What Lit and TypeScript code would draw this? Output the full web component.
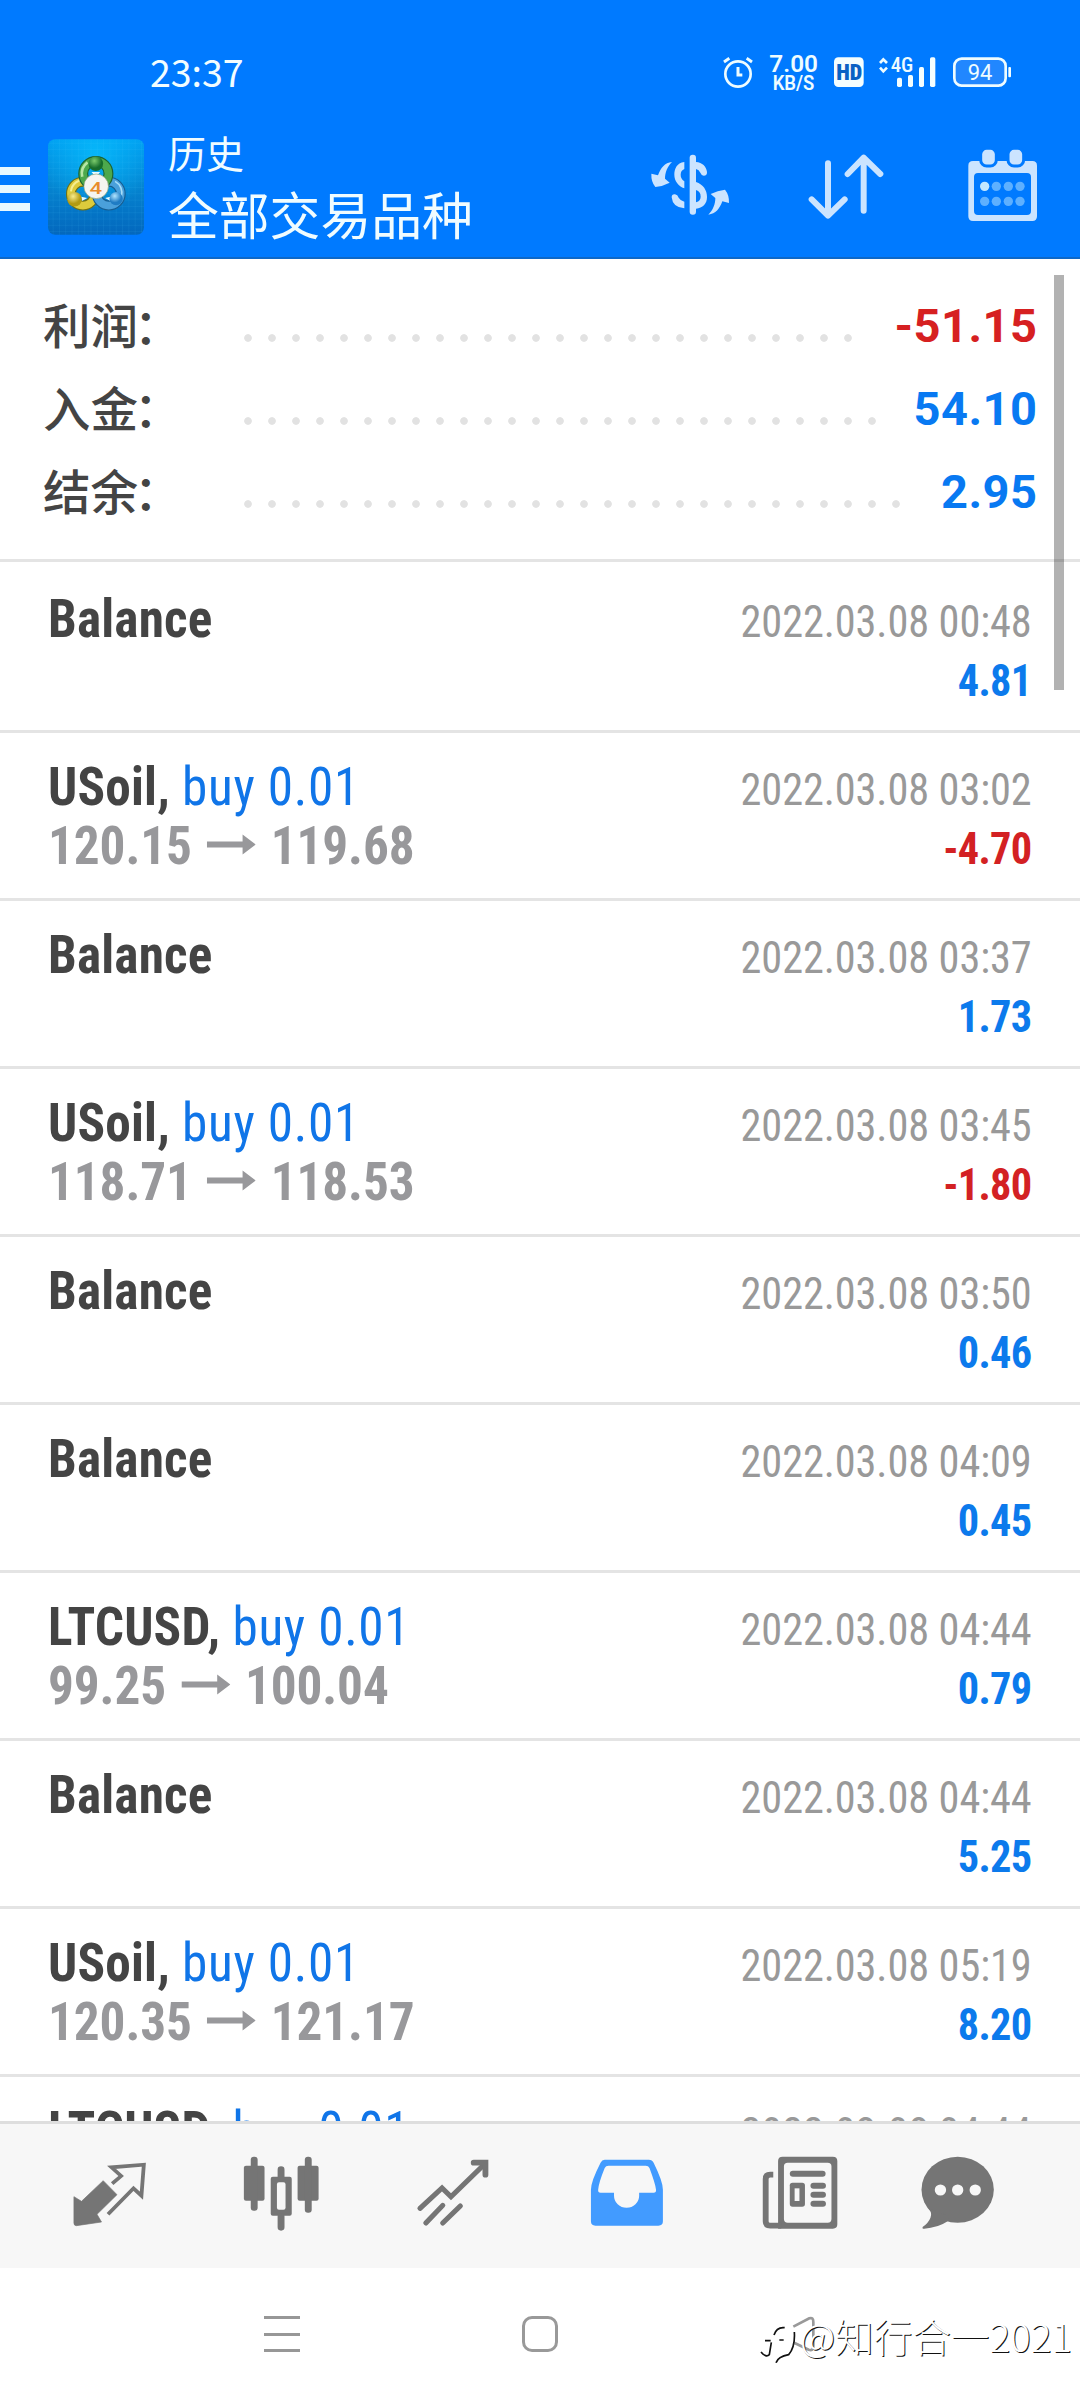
import { LitElement, html, css, svg, nothing } from "lit";
import { customElement, property } from "lit/decorators.js";

interface Deal {
  symbol: string;
  side?: string;
  open?: string;
  close?: string;
  time: string;
  profit: string;
}

const SUMMARY = [
  { label: "利润：", value: "-51.15" },
  { label: "入金：", value: "54.10" },
  { label: "结余：", value: "2.95" },
];

const DEALS: Deal[] = [
  { symbol: "Balance", time: "2022.03.08 00:48", profit: "4.81" },
  { symbol: "USoil,", side: "buy 0.01", open: "120.15", close: "119.68", time: "2022.03.08 03:02", profit: "-4.70" },
  { symbol: "Balance", time: "2022.03.08 03:37", profit: "1.73" },
  { symbol: "USoil,", side: "buy 0.01", open: "118.71", close: "118.53", time: "2022.03.08 03:45", profit: "-1.80" },
  { symbol: "Balance", time: "2022.03.08 03:50", profit: "0.46" },
  { symbol: "Balance", time: "2022.03.08 04:09", profit: "0.45" },
  { symbol: "LTCUSD,", side: "buy 0.01", open: "99.25", close: "100.04", time: "2022.03.08 04:44", profit: "0.79" },
  { symbol: "Balance", time: "2022.03.08 04:44", profit: "5.25" },
  { symbol: "USoil,", side: "buy 0.01", open: "120.35", close: "121.17", time: "2022.03.08 05:19", profit: "8.20" },
  { symbol: "LTCUSD,", side: "buy 0.01", time: "2022.03.08 04:44", profit: "" },
];

const tone = (v: string) => (v.startsWith("-") ? "loss" : "gain");

@customElement("status-bar")
class StatusBar extends LitElement {
  static styles = css`
    :host { display: flex; justify-content: space-between; align-items: center; height: 60px; padding: 45px 60px 0 150px; color: #f2fdff; }
    .clock { font: 400 37.5px/60px "Noto Sans CJK SC", sans-serif; margin-top: -9px; }
    text { font-family: Roboto, sans-serif; fill: #eefcff; }
    .rate { font-size: 72px; font-weight: 600; }
    .unit { font-size: 58px; font-weight: 600; }
    .hd { font-size: 68px; font-weight: 900; font-stretch: 75%; fill: #0a62c4; }
    .net { font-size: 59px; font-weight: 500; font-stretch: 75%; }
    .level { font-size: 65px; font-weight: 400; }
  `;
  render() {
    return html`
      <span class="clock">23:37</span>
      <svg width="310" height="60" viewBox="0 0 930 180" fill="none" stroke="#eefcff" stroke-width="8">
        <circle cx="84" cy="87" r="38" />
        <path d="M84 66V90H97M42 51L58 40M110 40L126 51" stroke-width="9" />
        <text class="rate" x="178" y="81" textLength="146" lengthAdjust="spacingAndGlyphs" stroke="none">7.00</text>
        <text class="unit" x="188" y="136" textLength="125" lengthAdjust="spacingAndGlyphs" stroke="none">KB/S</text>
        <rect x="372" y="37" width="89" height="89" rx="13" fill="#f4feff" stroke="none" />
        <text class="hd" x="379" y="106" textLength="78" lengthAdjust="spacingAndGlyphs" stroke="none">HD</text>
        <path d="M510 54L520 43L531 54M510 68L520 79L531 68" stroke-width="8" />
        <text class="net" x="542" y="81" textLength="68" lengthAdjust="spacingAndGlyphs" stroke="none">4G</text>
        <g fill="#f4feff" stroke="none">
          <rect x="561" y="98" width="15" height="28" rx="5" /><rect x="594" y="90" width="15" height="36" rx="5" />
          <rect x="627" y="66" width="15" height="60" rx="5" /><rect x="660" y="37" width="16" height="89" rx="5" />
          <rect x="895" y="66" width="8" height="31" rx="3" />
        </g>
        <rect x="733" y="41" width="154" height="81" rx="22" fill="#2187ff" />
        <text class="level" x="773" y="104" textLength="74" lengthAdjust="spacingAndGlyphs" stroke="none">94</text>
      </svg>
    `;
  }
}

@customElement("app-header")
class AppHeader extends LitElement {
  static styles = css`
    :host { display: flex; align-items: flex-start; border-bottom: 2px solid #0d68c8; color: #f0fcff; font-family: "Noto Sans CJK SC", sans-serif; }
    .menu { display: flex; flex-direction: column; gap: 10px; width: 30px; margin: 62px 18px 0 0; }
    .menu i { height: 8px; background: #e8f8ff; }
    .logo { width: 96px; height: 96px; margin: 34px 24px 0 0; }
    .four { font: 500 50px Roboto, sans-serif; fill: #e88c2c; }
    .titles { flex: 1; padding-top: 21px; }
    .small { font-size: 38px; line-height: 52px; }
    .large { font-size: 50.8px; line-height: 70px; }
    .actions { display: block; width: 440px; height: 90px; margin-top: 35px; }
  `;
  render() {
    return html`
      <div class="menu"><i></i><i></i><i></i></div>
      <svg class="logo" viewBox="24 27 289 288">
        <defs>
          <linearGradient id="bg" x2="0" y2="1"><stop offset="0" stop-color="#009df0" /><stop offset=".5" stop-color="#0584d0" /><stop offset="1" stop-color="#0367bd" /></linearGradient>
          <radialGradient id="glow" cx=".5" cy=".15" r=".6"><stop offset="0" stop-color="#08c0ff" stop-opacity=".75" /><stop offset="1" stop-color="#08c0ff" stop-opacity="0" /></radialGradient>
          <radialGradient id="gr" cx=".4" cy=".3"><stop offset="0" stop-color="#7ccb6c" /><stop offset="1" stop-color="#176d2b" /></radialGradient>
          <radialGradient id="ye" cx=".4" cy=".3"><stop offset="0" stop-color="#f8ec8c" /><stop offset="1" stop-color="#b29a12" /></radialGradient>
          <radialGradient id="bl" cx=".4" cy=".3"><stop offset="0" stop-color="#b2e6ff" /><stop offset="1" stop-color="#1f7cc4" /></radialGradient>
          <pattern id="grid" width="19" height="19" patternUnits="userSpaceOnUse"><path d="M0 0H19M0 0V19" stroke="#4fd0ff" stroke-opacity=".22" stroke-width="2" /></pattern>
        </defs>
        <rect x="24" y="27" width="289" height="288" rx="22" fill="url(#bg)" />
        <rect x="24" y="27" width="289" height="288" rx="22" fill="url(#glow)" />
        <rect x="24" y="27" width="289" height="288" rx="22" fill="url(#grid)" />
        <g fill="none">
          <circle cx="129" cy="191" r="36" stroke="#6f7015" stroke-width="30" /><circle cx="129" cy="191" r="36" stroke="#dccb3c" stroke-width="23" />
          <path d="M93 184A40 40 0 0 1 138 149" stroke="#f5ee90" stroke-width="6" />
          <circle cx="207" cy="191" r="36" stroke="#175d91" stroke-width="30" /><circle cx="207" cy="191" r="36" stroke="#4aa0db" stroke-width="23" />
          <path d="M226 154A40 40 0 0 1 245 200" stroke="#a7ddf8" stroke-width="5" />
          <circle cx="168" cy="131" r="38" stroke="#1c6331" stroke-width="30" /><circle cx="168" cy="131" r="38" stroke="#4da84c" stroke-width="23" />
          <path d="M127 140A42 42 0 0 1 143 97" stroke="#b7e6a5" stroke-width="8" />
        </g>
        <path d="M155 126H181L168 141ZM124 200L142 204L126 213ZM212 200L196 204L212 213Z" fill="#e8fbff" />
        <circle cx="168" cy="101" r="22" fill="url(#gr)" />
        <circle cx="104" cy="208" r="22" fill="url(#ye)" />
        <circle cx="229" cy="206" r="20" fill="url(#bl)" />
        <circle cx="169" cy="169" r="37" fill="#f5f5f1" stroke="#8aa07a" stroke-width="2" />
        <text class="four" x="149" y="191" textLength="38" lengthAdjust="spacingAndGlyphs" font-size="64">4</text>
      </svg>
      <div class="titles">
        <div class="small">历史</div>
        <div class="large">全部交易品种</div>
      </div>
      <svg class="actions" viewBox="0 0 1320 270" fill="#cbe4ff">
        <rect x="149" y="44" width="19" height="180" rx="9" />
        <path d="M133 66C110 68 103 88 103 104C103 123 115 138 133 145V124C125 118 122 112 122 104C122 95 126 90 133 87Z" />
        <path d="M95 172Q95 162 105 163Q113 164 116 173Q121 182 133 185V205Q98 203 95 172Z" />
        <path d="M168 66C187 67 199 80 201 96Q202 107 191 107Q184 106 181 98Q177 89 168 87Z" />
        <path d="M168 126C190 134 201 150 201 171C201 192 188 204 168 206V187C178 184 182 178 182 170C182 160 178 153 168 150Z" />
        <path d="M96 66C74 68 62 84 54 106L34 101Q33 125 46 141Q68 139 89 128L75 116C75 98 82 80 96 66Z" />
        <path transform="rotate(180 150.5 145)" d="M96 66C74 68 62 84 54 106L34 101Q33 125 46 141Q68 139 89 128L75 116C75 98 82 80 96 66Z" />
        <path d="M564 70V226M515 178L564 227L614 178M671 212V53M623 102L671 53L721 102" fill="none" stroke="#cbe4ff" stroke-width="18" stroke-linecap="round" stroke-linejoin="round" />
        <path fill-rule="evenodd" d="M999 63H1177Q1191 63 1191 77V229Q1191 243 1177 243H999Q985 243 985 229V77Q985 63 999 63ZM1014 99Q1002 99 1002 111V213Q1002 225 1014 225H1161Q1173 225 1173 213V111Q1173 99 1161 99Z" />
        <g stroke="#007aff" stroke-width="9">
          <rect x="1022" y="25" width="47" height="53" rx="18" /><rect x="1104" y="25" width="47" height="53" rx="18" />
        </g>
        <circle cx="1034" cy="139" r="14" fill="#c4e8ff" />
        <g fill="#5eb0ff">
          ${[1069, 1105, 1140].map((x) => svg`<circle cx=${x} cy="139" r="14" />`)}
          ${[1034, 1069, 1105, 1140].map((x) => svg`<circle cx=${x} cy="184" r="14" />`)}
        </g>
      </svg>
    `;
  }
}

@customElement("summary-panel")
class SummaryPanel extends LitElement {
  static styles = css`
    :host { display: block; height: 303px; padding: 25px 42.5px 0 43px; box-sizing: border-box; border-bottom: 3px solid #e4e4e4; }
    .line { display: flex; align-items: center; height: 83px; }
    .label { width: 193px; height: 83px; color: #444; font: 500 47.5px/79px "Noto Sans CJK SC", sans-serif; }
    .colon { margin-left: -4px; }
    .dots { flex: 1; height: 8px; margin: 25px 31px 0 0; background: radial-gradient(circle at 12px 4px, #e2e2e2 3.4px, transparent 4.2px) 0 0 / 24px 8px repeat-x; }
    .value { font: 700 47px/83px Roboto, sans-serif; letter-spacing: 0.5px; }
    .gain { color: #0879f2; }
    .loss { color: #d62021; }
  `;
  render() {
    return SUMMARY.map(
      (s) => html`<div class="line"><span class="label">${s.label.slice(0, -1)}<span class="colon">${s.label.slice(-1)}</span></span><span class="dots"></span><span class="value ${tone(s.value)}">${s.value}</span></div>`
    );
  }
}

@customElement("deal-row")
class DealRow extends LitElement {
  @property({ attribute: false }) deal!: Deal;
  static styles = css`
    :host { display: flex; justify-content: space-between; flex: none; box-sizing: border-box; height: 168px; padding: 23.5px 48px 0; border-bottom: 3px solid #e4e4e4; font-family: Roboto, sans-serif; font-stretch: 75%; }
    :host(:first-child) { height: 171px; padding-top: 26.5px; }
    .side { transform: scaleX(0.94); white-space: nowrap; }
    .left { transform-origin: 0 0; font-size: 54.5px; font-weight: 700; color: #444; }
    .right { transform-origin: 100% 0; font-size: 45px; color: #999; text-align: right; }
    .row { display: flex; align-items: baseline; height: 59px; line-height: 59px; }
    .right .row { justify-content: flex-end; letter-spacing: -0.1px; }
    .strut { width: 0; font-size: 54.5px; overflow: visible; visibility: hidden; }
    .symbol { letter-spacing: 0.2px; }
    .buy { color: #1075e8; font-weight: 400; margin-left: 13px; letter-spacing: 0.7px; }
    .prices { color: #98989b; letter-spacing: -0.1px; }
    .arrow { width: 52px; height: 22px; margin: 0 16px 0 16px; align-self: center; }
    .right .profit { font-weight: 700; letter-spacing: -0.7px; }
    .gain { color: #0c7aec; }
    .loss { color: #d32123; }
  `;
  render() {
    const d = this.deal;
    return html`
      <div class="side left">
        <div class="row"><span class="symbol">${d.symbol}</span>${d.side ? html`<span class="buy">${d.side}</span>` : nothing}</div>
        ${d.open
          ? html`<div class="row prices">${d.open}<svg class="arrow" viewBox="0 0 52 22" fill="#98989b"><path d="M0 7.5H38V.5L52 10.5L38 20.5V13.5H0Z" /></svg>${d.close}</div>`
          : nothing}
      </div>
      <div class="side right">
        <div class="row"><span class="strut">&#8203;</span>${d.time}</div>
        <div class="row profit ${tone(d.profit)}"><span class="strut">&#8203;</span>${d.profit}</div>
      </div>
    `;
  }
}

@customElement("tab-bar")
class TabBar extends LitElement {
  static styles = css`
    :host { display: flex; align-items: flex-start; box-sizing: border-box; height: 147px; padding: 29.3px 0 0 24.1px; border-top: 3px solid #dedede; background: #f7f7f7; }
    svg { flex: none; width: 172.2px; height: 80px; fill: #757575; }
    .line { fill: none; stroke: #757575; }
    .active { fill: #429bff; }
    .hole { fill: #f7f7f7; }
  `;
  render() {
    const icon = (x: number, body: unknown) =>
      html`<svg viewBox="${x} 280 500 240" preserveAspectRatio="none">${body}</svg>`;
    return [
      icon(70, svg`<path d="M300 363L340 405L282 464L295 487L222 498Q215 498 215 490V411L237 425Z" stroke="#757575" stroke-width="2" stroke-linejoin="round" />
        <path class="line" stroke-width="11" d="M326 372L352 349L324 323L418 315L411 408L388 386L314 464" />`),
      icon(570, svg`<rect x="709" y="318" width="60" height="105" rx="6" /><rect x="729" y="291" width="20" height="162" rx="9" />
        <path fill-rule="evenodd" d="M793 351H842Q848 351 848 357V462Q848 468 842 468H793Q787 468 787 462V357Q787 351 793 351ZM811 368Q805 368 805 374V444Q805 450 811 450H824Q830 450 830 444V374Q830 368 824 368Z" />
        <path class="line" stroke-width="20" stroke-linecap="round" d="M817 330V356M817 470V503" />
        <rect x="865" y="318" width="61" height="105" rx="6" /><rect x="886" y="291" width="20" height="168" rx="9" />`),
      icon(1070, svg`<path class="line" stroke-width="15" stroke-linecap="round" d="M1221 446L1285 385L1311 411L1405 317M1238 490L1287 437M1287 490L1338 439" />
        <path class="line" stroke-width="17" stroke-linecap="round" stroke-linejoin="miter" d="M1377 309H1411V345" />`),
      icon(2, svg`<path class="active" fill-rule="evenodd" d="M187 300H315Q325 300 329 309Q356 365 356 390V485Q356 498 343 498H160Q147 498 147 485V390Q147 365 175 309Q179 300 187 300ZM198 318Q190 318 187 325Q170 368 168 390Q167 399 175 399H214V408A36 36 0 0 0 287 408V399H329Q337 399 336 390Q334 372 317 325Q314 318 306 318Z" />`),
      icon(502, svg`<path fill-rule="evenodd" d="M704 291H850Q863 291 863 304V494Q863 507 850 507H691V304Q691 291 704 291ZM719 309Q708 309 708 320V478Q708 489 719 489H835Q846 489 846 478V320Q846 309 835 309Z" />
        <path class="line" stroke-width="17" d="M677 345H668Q655 345 655 358V485Q655 498 668 498H700" />
        <rect x="725" y="333" width="104" height="18" rx="9" /><rect x="725" y="369" width="44" height="72" rx="8" /><rect class="hole" x="739" y="386" width="14" height="38" />
        <rect x="785" y="369" width="45" height="18" rx="9" /><rect x="785" y="396" width="45" height="18" rx="9" /><rect x="785" y="423" width="45" height="18" rx="9" />`),
      icon(1002, svg`<ellipse cx="1213" cy="390" rx="105" ry="99" /><path d="M1128 446Q1140 460 1134 474Q1128 490 1112 501Q1108 507 1116 507Q1155 505 1184 485L1190 470Z" />
        <circle class="hole" cx="1163" cy="391" r="16.5" /><circle class="hole" cx="1213" cy="391" r="16.5" /><circle class="hole" cx="1264" cy="391" r="16.5" />`),
    ];
  }
}

@customElement("nav-bar")
class NavBar extends LitElement {
  static styles = css`
    :host { display: flex; position: relative; box-sizing: border-box; height: 132px; padding: 48px 0 0 264px; background: #fff; }
    .recent { display: flex; flex-direction: column; justify-content: space-between; width: 36px; height: 36px; margin-right: 222px; }
    .recent i { height: 3px; background: #979797; }
    .home { box-sizing: border-box; width: 36px; height: 36px; border: 3px solid #999; border-radius: 10px; }
    .mark { position: absolute; left: 750px; top: 42px; }
    .name { position: absolute; left: 800px; top: 40px; color: #fff; font: 300 38.6px/54px "Noto Sans CJK SC", sans-serif; text-shadow: 1px 1px 0 #111; white-space: nowrap; }
  `;
  render() {
    return html`
      <div class="recent"><i></i><i></i><i></i></div>
      <div class="home"></div>
      <svg class="mark" width="80" height="60" viewBox="0 0 240 180" fill="none">
        <path d="M130 50L178 25Q190 21 190 36V108Q190 124 176 119L134 99" stroke="#999" stroke-width="8" />
        <path d="M106 59Q84 57 77 79L66 128" stroke="#fff" stroke-width="8" />
        <path d="M104 53Q80 50 72 75M45 92H62M88 90H101M64 97L58 134Q48 144 33 126M133 66Q136 112 116 134Q84 140 78 158" stroke="#111" stroke-width="5" />
      </svg>
      <div class="name">@知行合一2021</div>
    `;
  }
}

@customElement("app-root")
class AppRoot extends LitElement {
  static styles = css`
    :host { display: flex; flex-direction: column; width: 1080px; height: 2400px; overflow: hidden; background: #fff; }
    .top { background: #007aff; height: 259px; box-sizing: border-box; flex: none; }
    app-header { box-sizing: border-box; height: 154px; }
    .body { position: relative; flex: 1; min-height: 0; overflow: hidden; }
    .list { display: flex; flex-direction: column; }
    .scroll { position: absolute; top: 16px; right: 16px; width: 10px; height: 415px; background: rgba(0, 0, 0, 0.3); }
    tab-bar, nav-bar { flex: none; }
  `;
  render() {
    return html`
      <div class="top"><status-bar></status-bar><app-header></app-header></div>
      <div class="body">
        <summary-panel></summary-panel>
        <div class="list">${DEALS.map((d) => html`<deal-row .deal=${d}></deal-row>`)}</div>
        <div class="scroll"></div>
      </div>
      <tab-bar></tab-bar>
      <nav-bar></nav-bar>
    `;
  }
}
